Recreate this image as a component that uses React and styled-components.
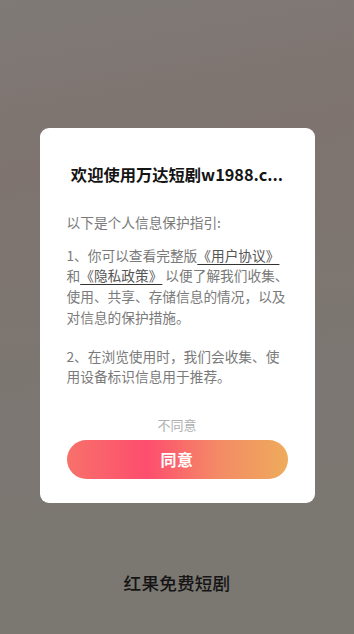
import React from "react";
import styled, { createGlobalStyle } from "styled-components";

const Global = createGlobalStyle`
  html, body { margin: 0; padding: 0; }
  body {
    width: 354px;
    height: 634px;
    overflow: hidden;
    font-family: "Noto Sans CJK SC", "Noto Sans", sans-serif;
  }
  #root { height: 100%; }
`;

const Screen = styled.div`
  height: 634px;
  display: flex;
  flex-direction: column;
  align-items: center;
  background: linear-gradient(170deg, #7f7a76 0%, #7e736f 25%, #7c7772 60%, #7b7771 100%);
`;

const Card = styled.div`
  margin-top: 128px;
  width: 275px;
  box-sizing: border-box;
  background: #fff;
  border-radius: 9px;
  padding: 34px 27px 24px;
  display: flex;
  flex-direction: column;
`;

const Title = styled.div`
  font-size: 16.3px;
  font-weight: 700;
  line-height: 24px;
  color: #141414;
  text-align: center;
  white-space: nowrap;
`;

const Body = styled.div`
  margin-top: 26px;
  font-size: 13.7px;
  line-height: 20.7px;
  color: #7a7a7a;
`;

const Para = styled.div`
  margin-top: ${(p) => p.$gap || 0}px;
`;

const Line = styled.div`
  white-space: pre;
`;

const Link = styled.span`
  color: #555;
  text-decoration: underline;
  text-decoration-color: #333;
  text-decoration-thickness: 1px;
  text-underline-offset: 3px;
  margin-right: ${(p) => p.$after || 0}px;
`;

const Decline = styled.div`
  margin-top: 28px;
  font-size: 13px;
  line-height: 20px;
  color: #b0b0b0;
  text-align: center;
`;

const Agree = styled.button`
  margin-top: 5px;
  height: 39px;
  border: none;
  border-radius: 20px;
  background: linear-gradient(90deg, #f7716a 0%, #fe4d6e 36%, #f48a66 68%, #eeab5b 100%);
  color: #fff;
  font-family: "Noto Sans CJK SC", sans-serif;
  font-size: 16px;
  font-weight: 700;
  letter-spacing: 0.5px;
  padding: 0;
`;

const Footer = styled.div`
  margin-top: 68px;
  font-size: 17.6px;
  line-height: 24px;
  font-weight: 500;
  color: #151515;
  letter-spacing: 0.2px;
`;

export default function App() {
  return (
    <>
      <Global />
      <Screen>
        <Card>
          <Title>欢迎使用万达短剧w1988.c...</Title>
          <Body>
            <Para>以下是个人信息保护指引:</Para>
            <Para $gap={12}>
              <Line>
                1、你可以查看完整版<Link>《用户协议》</Link>
              </Line>
              <Line>
                和<Link $after={3}>《隐私政策》</Link>以便了解我们收集、
              </Line>
              <Line>使用、共享、存储信息的情况，以及</Line>
              <Line>对信息的保护措施。</Line>
            </Para>
            <Para $gap={18}>
              <Line>2、在浏览使用时，我们会收集、使</Line>
              <Line>用设备标识信息用于推荐。</Line>
            </Para>
          </Body>
          <Decline>不同意</Decline>
          <Agree>同意</Agree>
        </Card>
        <Footer>红果免费短剧</Footer>
      </Screen>
    </>
  );
}
